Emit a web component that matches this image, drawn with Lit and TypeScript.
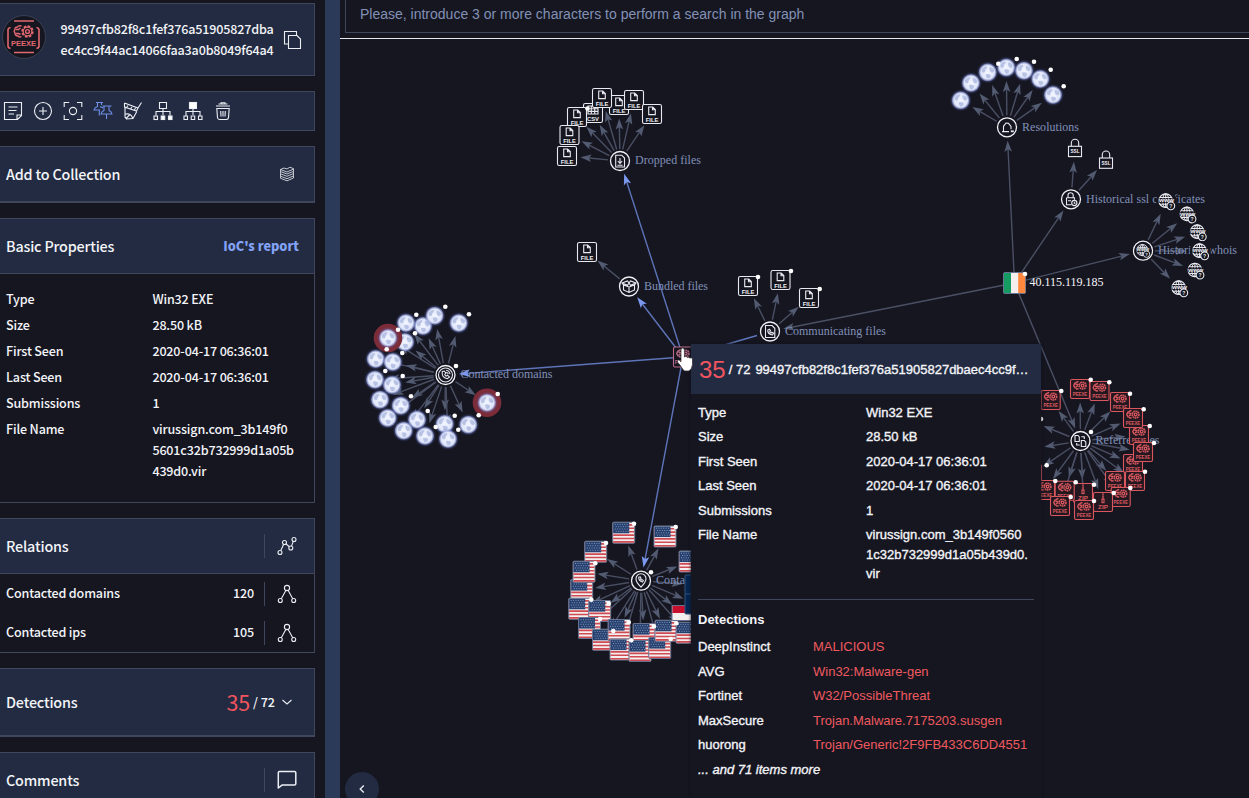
import { LitElement, html, svg, css } from "lit";
import { customElement } from "lit/decorators.js";

type P = [number, number];
type Item = [string, number, number];
interface Group {
  icon: string;
  at: P;
  label: string;
  width: number;
  items: Item[];
  dots: P[];
}

const of = (kind: string, pts: P[]): Item[] => pts.map(([x, y]) => [kind, x, y]);

const MAIN: P = [683, 357];
const IP: P = [1014.5, 283];

const GROUPS: Record<string, Group> = {
  dropped: {
    icon: "dropped", at: [620, 161], label: "Dropped files", width: 66,
    items: [["csv", 593, 113], ["file", 577, 117], ["file", 569.5, 135], ["file", 567, 156], ["file", 619, 105], ["file", 602, 98], ["file", 634, 100], ["file", 652, 114]],
    dots: [[587.5, 108.5]],
  },
  bundled: { icon: "bundled", at: [629, 286.5], label: "Bundled files", width: 64, items: [["file", 587, 252]], dots: [] },
  communicating: {
    icon: "communicating", at: [770, 331.5], label: "Communicating files", width: 101,
    items: [["file", 748, 286], ["file", 780.5, 280], ["file", 809, 298]],
    dots: [[758, 277], [791, 271], [819.7, 289]],
  },
  domains: {
    icon: "phone", at: [445.5, 375], label: "Contacted domains", width: 92,
    items: [
      ...of("globe", [[405, 342], [423, 326], [406, 323], [434.7, 315.7], [458.7, 323]]),
      ["alert", 388, 338],
      ...of("globe", [[375.7, 359], [392.7, 362], [375, 379.7], [392, 385], [380, 399.7], [400.7, 405.7], [387.7, 418], [417, 419.7], [403.7, 430.7], [425, 436], [444.7, 424], [448, 439], [468.3, 424.7]]),
      ["alert", 487, 402.7],
    ],
    dots: [[445.3, 306.7], [469, 314.3], [416.3, 314.7], [398, 329.7], [415, 333.3], [386.7, 349.3], [402.3, 353], [385.3, 371], [402.7, 376], [411, 396.3], [427.7, 411], [435.7, 427], [454.7, 415.7], [458.3, 429.7], [478.7, 415.3], [497.7, 394], [456, 366]],
  },
  ips: {
    icon: "pin", at: [641, 580.7], label: "Contacted ips", width: 67,
    items: [
      ...of("us", [[623.7, 532.7], [665, 536.5], [595.7, 551.7], [581.7, 590], [584, 571.7], [579.7, 608.7], [599.7, 611], [589.5, 628], [603.5, 639.7], [619, 630], [621, 649.5], [644, 634], [640, 651], [659.7, 648], [666, 630.7], [690, 561.5]]),
      ["id", 683, 613], ["us", 687, 632.7], ["navy", 696, 585], ["navy", 696, 604],
    ],
    dots: [[634, 523.7], [675.7, 527], [606, 543], [595.3, 563.3], [651, 572.3], [591.3, 599.7], [608.7, 603.7], [600, 619], [628.7, 622.3], [613.3, 631], [654, 626.3], [631.3, 640.3], [670.7, 639], [676.3, 623.3]],
  },
  resolutions: {
    icon: "resolutions", at: [1007, 127.3], label: "Resolutions", width: 57,
    items: of("globe", [[960.7, 100.3], [971, 83], [987.7, 72.3], [1006.3, 67.5], [1024, 70.7], [1040.3, 79], [1053, 95]]),
    dots: [[998.3, 63.7], [1016.7, 59], [1034, 61.7], [1050.7, 69.7], [1063.7, 86.3]],
  },
  ssl: { icon: "lock", at: [1071, 199.3], label: "Historical ssl certificates", width: 119, items: [["ssl", 1075, 148.3], ["ssl", 1106, 160]], dots: [] },
  whois: {
    icon: "whois", at: [1143, 250.7], label: "Historical whois", width: 79,
    items: of("www", [[1166.5, 201.5], [1187.7, 214.7], [1198, 232.5], [1200.3, 251.5], [1195.7, 270.8], [1179.5, 288.5]]),
    dots: [],
  },
  referrer: {
    icon: "referrer", at: [1080.5, 441], label: "Referrer files", width: 64,
    items: [
      ...of("peexe", [[1032, 474], [1031, 421], [1031, 449], [1050.7, 400], [1080, 389], [1099.5, 391], [1120, 402], [1139, 435], [1133, 418], [1133, 464], [1143, 452], [1115, 481], [1135, 481], [1120.7, 497]]),
      ["zip", 1083, 493], ["zip", 1103, 502],
      ...of("peexe", [[1045, 490], [1064.7, 490.7], [1060, 506], [1084, 510]]),
    ],
    dots: [[1061.3, 391], [1090.7, 379.7], [1109.3, 382.3], [1130, 393.7], [1143.7, 409.3], [1091, 432], [1149.7, 426], [1154, 443], [1145, 471.7], [1130.3, 488], [1113.7, 493], [1094, 484.7], [1094, 501], [1070.7, 497], [1075.7, 482.3], [1055.3, 481], [1046.7, 465.3], [1041, 419]],
  },
};

const edge = (from: P, to: P, blue = false, start = 0) => {
  const dx = to[0] - from[0], dy = to[1] - from[1];
  const len = Math.hypot(dx, dy), ux = dx / len, uy = dy / len;
  const gap = Math.min(13.5, len * 0.5);
  const tx = to[0] - ux * gap, ty = to[1] - uy * gap;
  const bx = tx - ux * 11, by = ty - uy * 11;
  const mx = tx - ux * 8.5, my = ty - uy * 8.5;
  return svg`<g class=${blue ? "edge blue" : "edge"}>
    <path d="M${from[0] + ux * start} ${from[1] + uy * start}L${mx} ${my}" />
    <path class="tip" d="M${tx} ${ty}L${bx - uy * 3.8} ${by + ux * 3.8}L${mx} ${my}L${bx + uy * 3.8} ${by - ux * 3.8}z" />
  </g>`;
};

const gear = svg`
  <circle cx="2.6" cy="-3.4" r="3.4" stroke-width="1.6" stroke-dasharray="1.7 .5" />
  <circle cx="2.6" cy="-3.4" r="1.4" stroke-width="1.3" />
  <path d="M-1.500-7.200q-2-.4-2.500 1-1.800.2-1.700 1.700-1.100 1 0 2 0 1.600 1.800 1.600.7 1.400 2.500.5M-4.500-4.800l3 .3M-4.300-2.400l2.500-.8" stroke-width="1.400" />`;

const glyph = (kind: string) => {
  switch (kind) {
    case "file":
      return svg`<rect class="plate" x="-9.5" y="-9.5" width="19" height="19" rx="1.8" />
        <path d="M-3.300-7h4l2.600 2.600v5h-6.600zM.5-7v2.800h2.800" />
        <text class="tag" y="7.600" textLength="12.500" lengthAdjust="spacingAndGlyphs">FILE</text>`;
    case "csv":
      return svg`<rect class="plate" x="-9.5" y="-9.5" width="19" height="19" rx="1.8" />
        <path d="M-5-7H5V1H-5zM-5-4.300H5M-5-1.600H5M-1.700-7v8M1.700-7v8" />
        <text class="tag" y="7.600" textLength="12" lengthAdjust="spacingAndGlyphs">CSV</text>`;
    case "peexe":
      return svg`<g class="red"><rect class="plate" x="-9.5" y="-9.5" width="19" height="19" rx="1.500" />
        ${gear}<text class="tag thin" y="7" textLength="14.500" lengthAdjust="spacingAndGlyphs">PEEXE</text></g>`;
    case "zip":
      return svg`<g class="red"><rect class="plate" x="-9.5" y="-9.5" width="19" height="19" rx="1.500" />
        <path stroke-width="1.800" d="M0-8.500v6" stroke-dasharray="1.300 .6" /><rect x="-1" y="-3" width="2" height="3.600" />
        <text class="tag" y="7.400" textLength="10" lengthAdjust="spacingAndGlyphs">ZIP</text></g>`;
    case "alert":
      return svg`<circle class="halo" r="14.300" />${glyph("globe")}`;
    case "globe":
      return svg`<circle r="11" fill="url(#glow)" stroke="none" /><circle r="9" fill="url(#ball)" stroke="none" />
        <path class="land" d="M-6-3q2-3 5-3 1 2-1 3l-1 3q-2 1-3-1zM2-5q3 0 4.500 3Q6 1 3.500 0 1-2 2-5zM-2 2q3-1 5 1 0 3-3 3.500Q-2 5-2 2z" />`;
    case "us":
      return svg`<rect class="flag" x="-11" y="-10.500" width="22" height="21" rx="1" />
        <path class="stripes" d="M-10.500-7.800h21M-10.500-4.400h21M-10.500-1h21M-10.500 2.400h21M-10.500 5.800h21M-10.500 9.200h21" />
        <rect class="canton" x="-10.500" y="-10" width="16" height="10.600" />
        <path class="stars" d="M-9-8.300H5M-8-6H5M-9-3.700H5M-8-1.400H5" />`;
    case "id":
      return svg`<rect class="flag" x="-11" y="-7.500" width="22" height="15" /><rect class="rose" x="-10.500" y="-7" width="21" height="7" />`;
    case "navy":
      return svg`<rect class="flag navy" x="-11" y="-10" width="22" height="20" rx="1" />`;
    case "ireland":
      return svg`<rect class="flag" x="-11" y="-10.500" width="22" height="21" rx="1.500" />
        <rect class="green" x="-10.500" y="-10" width="7" height="20" /><rect class="orange" x="3.700" y="-10" width="7" height="20" />`;
    case "ssl":
      return svg`<rect x="-6.500" y="-2" width="13" height="10.300" class="plate" /><path d="M-3.700-2v-3.300a3.700 3.700 0 0 1 7.400 0V-2" />
        <text class="tag small" y="5.200" textLength="9" lengthAdjust="spacingAndGlyphs">SSL</text>`;
    case "www":
      return svg`<circle class="back" r="10.500" /><circle r="6.800" cx="-.8" cy="-.8" /><ellipse cx="-.8" cy="-.8" rx="3" ry="6.800" /><path d="M-6.500-4H5M-6.500 2.700H4M-.8-7.500V6" />
        <rect class="mask" x="-8" y="-3.200" width="15.500" height="4.600" />
        <text class="tag" y=".9" textLength="15" lengthAdjust="spacingAndGlyphs">www</text>
        <circle class="plate" cx="4.300" cy="4.300" r="3.900" /><text class="tag small" x="4.300" y="6.200">?</text>`;
    case "main":
      return svg`<g class="mainred"><rect class="plate" x="-9.500" y="-10" width="19" height="20" rx="1.500" />${gear}
        <text class="tag thin" y="7.200">PEEXE</text></g>`;
    case "dropped":
      return svg`<path d="M-4.300-5.800h6l2.800 2.800v9h-8.800zM0-3v5.200M-2.200 0 0 2.400 2.200 0M-2.600 4.200h5.200" />`;
    case "bundled":
      return svg`<path d="M-5.500-1.500 0 .5l5.500-2v5L0 6l-5.500-2.500zM0 .5V6M-5.500-1.500-7-3.500l5.500-2L0-3.500l1.500-2 5.500 2-1.500 2M-7-3.500-1.500-1.200 0-3.500l1.500 2.300L7-3.500" />`;
    case "communicating":
      return svg`<path d="M-4.500-6H2l2.800 2.800V6h-9.300zM-2.200-1.500q-.5 4 4.600 5l1.200-1.700-1.800-1-.8.800q-1.200-.6-1.300-1.600l.8-.8-1-1.500z" />`;
    case "phone":
      return svg`<circle r="7" /><path d="M-3.200-3.500q-1.200 6 5 7.200L4 1.900 1.900.3.700 1.200Q-.8.300-.7-.8L.4-1.900-1.200-4zM.5-4.800Q4-4.500 4.500-.8M.8-2.800q1.700.2 2 2" />`;
    case "pin":
      return svg`<path d="M0 6.500Q-5.300 1-5-2a5 5 0 0 1 10 0Q5 1 0 6.500zM-2.300-3.500q0 4 3.800 4.700l.8-1.500-1.300-.8-.7.500-.8-1 .5-.8-.8-1.500z" />`;
    case "resolutions":
      return svg`<path d="M-5 4.300H2M-3.500 4V-1L-1-4.300 1.500-4 4-.8V2" /><path d="M3.800 4h3" stroke-width="1.800" />`;
    case "lock":
      return svg`<path d="M-4.500-1.500h8v2M-4.500-1.500v7h5M-3-1.500V-4a2.600 2.600 0 0 1 5.200 0v2.500M-3 1.500h3" /><circle cx="3.300" cy="3.700" r="2.600" /><path d="M3.300 2.400v1.500h1.200" />`;
    case "whois":
      return svg`<g transform="scale(.82)">${glyph("www")}</g>`;
    case "referrer":
      return svg`<path d="M-5.500-5.500h3L-1.200-4V.5h-4.300zM.8-.5h3L5.300 1v4.500H.8zM.8-4.300h3v2.300M-.8 4h-3V2" />`;
    default:
      return svg``;
  }
};

const at = (kind: string, x: number, y: number) => svg`<g class="glyph" transform="translate(${x} ${y})">${glyph(kind)}</g>`;

@customElement("relation-graph")
class RelationGraph extends LitElement {
  static styles = css`
    :host { display: block; width: 909px; height: 759px; }
    svg { display: block; width: 100%; height: 100%; }
    .edge { stroke: #4a5064; stroke-width: 1.400; fill: none; }
    .edge .tip { fill: #525b71; stroke: none; }
    .edge.blue { stroke: #5d74b8; }
    .edge.blue .tip { fill: #7c98ee; }
    .glyph { fill: none; stroke: #e9eaf0; stroke-width: 1.100; }
    .plate { fill: #161621; }
    .back { fill: #161621; stroke: none; }
    .hub { fill: #161621; stroke: #f0f1f5; stroke-width: 1.300; }
    .tag { font: 700 6px "Liberation Sans", sans-serif; fill: #f0f1f5; stroke: none; text-anchor: middle; }
    .tag.small { font-size: 5px; }
    .tag.thin { font-size: 5px; }
    .red { stroke: #d9585f; }
    .red .tag { fill: #d9585f; }
    .red .plate { fill: #241820; }
    .mainred { stroke: #bd6c87; }
    .mainred .tag { fill: #bd6c87; }
    .label { font: 12px "Liberation Serif", serif; fill: #8090b7; }
    .label.ip { fill: #f5f5f7; }
    .halo { fill: #7b2c38; stroke: none; }
    .land { fill: #a7b4dc; fill-opacity: .75; stroke: none; }
    .flag { fill: #f4eeee; stroke: #66728f; stroke-width: 1; }
    .flag.navy { fill: #07264f; stroke: #315280; }
    .stripes { stroke: #cf4a52; stroke-width: 1.600; }
    .canton { fill: #26406f; stroke: none; }
    .stars { stroke: #8fa1c2; stroke-width: .9; stroke-dasharray: 1 1.400; }
    .rose { fill: #c8102e; stroke: none; }
    .green { fill: #169b62; stroke: none; }
    .orange { fill: #ff883e; stroke: none; }
    .mask { fill: #161621; fill-opacity: .75; stroke: none; }
    .dot { fill: #fff; }
  `;
  render() {
    const all = Object.values(GROUPS);
    const g = GROUPS;
    return html`<svg viewBox="340 39 909 759">
      <defs>
        <radialGradient id="glow"><stop offset=".6" stop-color="#6a7ad0" stop-opacity=".75" /><stop offset="1" stop-color="#5565b5" stop-opacity="0" /></radialGradient>
        <radialGradient id="ball"><stop offset="0" stop-color="#f3f6ff" /><stop offset=".75" stop-color="#e0e6fa" /><stop offset="1" stop-color="#a9b5ea" stop-opacity=".35" /></radialGradient>
      </defs>
      ${[g.dropped, g.bundled, g.domains, g.ips].map((t) => edge(MAIN, t.at, true))}
      <path class="edge blue" d="M683 357L757 335.500" />
      ${[g.communicating, g.resolutions, g.ssl, g.whois, g.referrer].map((t) => edge(IP, t.at))}
      ${all.map((t) => t.items.map((i) => edge(t.at, [i[1], i[2]], false, 12)))}
      ${all.map((t) => svg`<text class="label" x=${t.at[0] + 15} y=${t.at[1] + 3.3} textLength=${t.width}>${t.label}</text>`)}
      <text class="label ip" x="1029.500" y="286" textLength="74">40.115.119.185</text>
      ${all.map((t) => svg`
        ${t.items.map((i) => at(i[0], i[1], i[2]))}
        <circle class="hub" cx=${t.at[0]} cy=${t.at[1]} r="9.500" />
        ${at(t.icon, t.at[0], t.at[1])}
        ${t.dots.map((d) => svg`<circle class="dot" cx=${d[0]} cy=${d[1]} r="2.300" />`)}`)}
      ${at("ireland", IP[0], IP[1])}<circle class="dot" cx="1025" cy="274" r="2.300" />
      ${at("main", MAIN[0], MAIN[1])}
    </svg>`;
  }
}

const ICONS: Record<string, unknown> = {
  copy: svg`<path d="M5 14H1.500V1.500h12V5M5.500 5.500H14l3.500 3.500v9.500h-12z" />`,
  note: svg`<path d="M1.500 1.500h17v13l-4 4h-13zM18.500 14h-4.500v4.500M5.500 6h9M5.500 9.500h8M5.500 13h5.500" />`,
  plus: svg`<circle cx="10" cy="10" r="8.500" /><path d="M10 6v8M6 10h8" />`,
  focus: svg`<path d="M1.200 6V1.500h5M14 1.500h4.800V6M18.800 14v4.500H14M6 18.500H1.200V14" /><circle cx="10" cy="10" r="3.600" />`,
  pins: svg`<path d="M3 1.500h7M4.500 1.500v4Q1.500 6.500 1 9h6M8.500 1.500V4M6.300 9v5.500M9.500 5h9M11 5v4.500q-2.500 1-3 3.500h11q-.500-2.500-3-3.500V5M13.500 13v5M7 5.500l3 1.500" />`,
  marker: svg`<path d="M1.500 2 15 7l3.500-5.500M1.500 2v4l12 4L15 7M2 6.500v9.500l1.500 2 6.500-.5 3.800-7M3 17.500 7 13.500M2 13.200q3-.7 5 .3t2.500 3.700M5 4.500 3.500 6.500M9 6 7.500 8M12.500 7l-1 2" />`,
  childs: svg`<path d="M6.500 1.500h7v6h-7zM10 7.500v6.500M3 14.500v-4h14v4" /><rect x="1" y="15" width="3.500" height="3.500" /><g class="solid"><rect x="8.200" y="15" width="3.500" height="3.500" /><rect x="15.500" y="15" width="3.500" height="3.500" /></g>`,
  parent: svg`<rect class="solid" x="6.500" y="1.500" width="7" height="6" /><path d="M10 7.500v6.500M3 14.500v-4h14v4M1 15h3.500v3.500H1zM8.200 15h3.500v3.500H8.200zM15.500 15H19v3.500h-3.500z" />`,
  trash: svg`<path d="M3 5h14M5.500 3h9M8 3V1.800h4V3M3.800 7.500h12.400l-.7 9q-.2 2-2 2h-7q-1.800 0-2-2zM7.700 10l.3 5.500M10 10v5.500M12.300 10l-.3 5.500" />`,
  stack: svg`<path stroke-width=".8" d="M3.500 5.500 7 4l3 1 3-1.800 3.500 1.500M3.500 5.500v2l6.500 2.500 6.500-2.700V4.700M3.500 5.500 10 8l6.500-3M3.500 7.500v2.300L10 12.300l6.500-2.800V7.500M3.500 10v2.200l6.500 2.500 6.500-2.800V9.500M3.500 12.300v2l6.500 2.500 6.500-2.800v-2" />`,
  path: svg`<circle cx="3" cy="16.500" r="2" /><circle cx="7.500" cy="6.500" r="2" /><circle cx="13.800" cy="12" r="2" /><circle cx="17" cy="3.500" r="2" /><path d="M3.800 14.600 6.700 8.300M9 8l3.500 2.700M14.500 10.100l1.800-4.700" />`,
  tree: svg`<circle cx="10" cy="4" r="2.600" /><circle cx="3.300" cy="16.500" r="2" /><circle cx="16.700" cy="16.500" r="2" /><path d="M8.800 6.500 4.300 14.700M11.200 6.500l4.500 8.200" />`,
  down: svg`<path d="M5.500 8l4.500 4L14.500 8" />`,
  left: svg`<path d="M12 6l-4 4 4 4" />`,
  chat: svg`<path stroke-width="1.500" stroke-linejoin="round" d="M2.500 1.500h15q1.300 0 1.300 1.300v11q0 1.300-1.300 1.300H5L1.300 18V2.800q0-1.300 1.200-1.300z" />`,
};

const icon = (name: string, cls = "") => html`<svg class="icon ${cls}" viewBox="0 0 20 20">${ICONS[name]}</svg>`;

@customElement("app-root")
class AppRoot extends LitElement {
  static styles = css`
    :host { display: flex; width: 1249px; height: 798px; overflow: hidden; position: relative; background: #161621; color: #f3f4f8;
      font: 500 12.550px/21px "Noto Sans CJK SC", sans-serif; letter-spacing: -.16px; }
    .side { box-sizing: border-box; width: 325px; padding: 3px 10px 0 0; display: flex; flex-direction: column; gap: 15px; flex: none; height: 900px; }
    .split { width: 15px; flex: none; background: #2c3a59; }
    .card { box-sizing: border-box; border: 1px solid #40475c; border-left: 0; background: #222b41; flex: none; }
    .row { display: flex; align-items: center; }
    .row > span { margin-top: -2px; }
    .id { height: 73px; padding-left: 2px; }
    .avatar { width: 44px; height: 44px; flex: none; margin-top: -6px; }
    .hash { width: 213px; margin: -2px 0 0 14.500px; white-space: nowrap; }
    .icon { width: 20px; height: 20px; fill: none; stroke: #eceef4; stroke-width: 1.100; display: block; flex: none; }
    .icon .solid { fill: #fff; }
    .icon.blue { stroke: #6f8fe8; }
    .icon.copy { margin-left: 9px; }
    .tools { height: 40px; gap: 10px; padding-left: 3px; }
    .head { box-sizing: border-box; padding: 0 15px 0 6px; justify-content: space-between; font-size: 14.350px; letter-spacing: -.18px; }
    .add { height: 57px; border-bottom-width: 2px; padding-right: 17px; }
    .body { background: #161621; }
    .basic { height: 285px; }
    .basic .head { height: 55px; border-bottom: 1px solid #40475c; background: #222b41; }
    .link { color: #82a2f5; font-size: 12.700px; font-weight: 900; letter-spacing: 0; }
    .props { display: grid; grid-template-columns: 146.400px 144px; row-gap: 5px; padding: 14px 0 0 6px; margin: 0; }
    .props span { white-space: pre; }
    .rel { height: 135px; }
    .rel .head { height: 55px; border-bottom: 1px solid #40475c; background: #222b41; padding-right: 17px; }
    .line { height: 39px; padding: 0 17px 0 6px; }
    .grow { flex: 1; }
    .bar { width: 1px; height: 24px; background: #40475c; margin: 0 12px 0 10px; }
    .det { height: 69px; border-bottom-width: 2px; padding-right: 17px; }
    .det .icon { margin-left: 2px; }
    .big { font-size: 21.500px; color: #f0555f; font-weight: 400; margin-right: 3px; }
    .tot { font-size: 12.550px; letter-spacing: 0; }
    .com { height: 56px; padding-right: 17px; }
    .main { flex: 1; display: flex; flex-direction: column; letter-spacing: 0; }
    .search { box-sizing: border-box; height: 33px; margin: 0 0 5px 5px; border: 1px solid #40475c; border-width: 0 0 1px 1px; padding-left: 14px; font: 14px/28px "Liberation Sans", sans-serif; color: #8291b5; }
    .rule { height: 1px; background: #e6e7ea; flex: none; }
    .tip { position: absolute; left: 691px; top: 344px; width: 350px; height: 460px; background: #161621; box-shadow: 0 0 3px #101019; font: 13px/19.500px "Liberation Sans", sans-serif; letter-spacing: 0; -webkit-text-stroke: .35px currentColor; }
    .tiphead { box-sizing: border-box; height: 50px; padding: 1px 0 0 8px; background: #222b41; white-space: pre; }
    .tiphead > span { margin-top: 0; }
    .tiphead .big { font-size: 24px; margin-right: 3px; -webkit-text-stroke: 0; }
    .tiphead .sum { margin-right: 5px; }
    .grid { display: grid; grid-template-columns: 168px 168px; row-gap: 5px; padding: 8.500px 0 15px; margin: 0 7px; border-bottom: 1px solid #40475c; }
    .grid span, .hits span { white-space: pre; }
    .hits { display: grid; grid-template-columns: 115px auto; row-gap: 5px; padding: 7.500px 7px 5px; }
    .sec { padding: 10.500px 7px 0; font-weight: 700; -webkit-text-stroke: 0; }
    .bad { color: #ef5a5f; -webkit-text-stroke: 0; }
    .more { padding-left: 7px; font-style: italic; }
    .back { position: absolute; left: 345px; top: 772px; width: 34px; height: 34px; border-radius: 50%; background: #222b41; display: flex; align-items: center; justify-content: center; }
    .back .icon { width: 18px; height: 18px; stroke-width: 1.500; }
    .cursor { position: absolute; left: 675px; top: 347px; width: 20px; height: 25px; }
    .ring { fill: #161621; stroke: #3a4154; }
    .mark { fill: none; stroke: #e0686f; stroke-width: 1.600; }
    .mark text { font: 700 8px "Liberation Sans", sans-serif; letter-spacing: 0; fill: #e0686f; stroke: none; }
  `;
  render() {
    const props = [["Type", "Win32 EXE"], ["Size", "28.50 kB"], ["First Seen", "2020-04-17 06:36:01"], ["Last Seen", "2020-04-17 06:36:01"], ["Submissions", "1"]];
    const hits = [["DeepInstinct", "MALICIOUS"], ["AVG", "Win32:Malware-gen"], ["Fortinet", "W32/PossibleThreat"], ["MaxSecure", "Trojan.Malware.7175203.susgen"], ["huorong", "Trojan/Generic!2F9FB433C6DD4551"]];
    return html`
      <div class="side">
        <div class="card row id">
          <svg class="avatar" viewBox="0 0 44 44">
            <circle class="ring" cx="22" cy="22" r="21.500" />
            <g class="mark"><path d="M12 6h20M12 37.500h20M8.500 12.500q-2.500.5-2.500 2.500v16q0 2 2.500 2.500M34.500 12.500q2.500.5 2.500 2.500v16q0 2-2.500 2.500" />
              <circle cx="25.500" cy="16.500" r="5.200" stroke-dasharray="2.600 1.400" stroke-width="2" /><circle cx="25.500" cy="16.500" r="4.300" stroke-width="1.200" /><circle cx="25.500" cy="16.500" r="1.900" stroke-width="1.400" />
              <path stroke-width="1.400" d="M19.500 11q-3-1-4 1-3 .2-2.500 2.500-1.500 1.500 0 3.500 0 3 3 3 1.500 1.700 3.500.5M14 14.500h2.500l2-1.500M14 18.500h2.500l2 1" />
              <text x="9" y="31" textLength="25" lengthAdjust="spacingAndGlyphs">PEEXE</text></g>
          </svg>
          <div class="hash">99497cfb82f8c1fef376a51905827dba<br />ec4cc9f44ac14066faa3a0b8049f64a4</div>
          ${icon("copy", "copy")}
        </div>
        <div class="card row tools">${["note", "plus", "focus", "pins", "marker", "childs", "parent", "trash"].map((n) => icon(n, n === "pins" ? "blue" : ""))}</div>
        <div class="card row head add"><span>Add to Collection</span>${icon("stack")}</div>
        <div class="card body basic">
          <div class="row head"><span>Basic Properties</span><span class="link">IoC's report</span></div>
          <div class="props">
            ${props.map(([a, b]) => html`<span>${a}</span><span>${b}</span>`)}
            <span>File Name</span><span>${"virussign.com_3b149f0\n5601c32b732999d1a05b\n439d0.vir"}</span>
          </div>
        </div>
        <div class="card body rel">
          <div class="row head"><span class="grow">Relations</span><div class="bar"></div>${icon("path")}</div>
          ${[["Contacted domains", "120"], ["Contacted ips", "105"]].map(([a, b]) => html`<div class="row line"><span class="grow">${a}</span><span>${b}</span><div class="bar"></div>${icon("tree")}</div>`)}
        </div>
        <div class="card row head det"><span class="grow">Detections</span><span class="big">35</span><span class="tot">/ 72</span>${icon("down")}</div>
        <div class="card row head com"><span class="grow">Comments</span><div class="bar"></div>${icon("chat")}</div>
      </div>
      <div class="split"></div>
      <div class="main">
        <div class="search">Please, introduce 3 or more characters to perform a search in the graph</div>
        <div class="rule"></div>
        <relation-graph></relation-graph>
      </div>
      <div class="back">${icon("left")}</div>
      <div class="tip">
        <div class="tiphead row"><span class="big">35</span><span class="sum">/ 72</span><span>99497cfb82f8c1fef376a51905827dbaec4cc9f…</span></div>
        <div class="grid">
          ${props.map(([a, b]) => html`<span>${a}</span><span>${b}</span>`)}
          <span>File Name</span><span>${"virussign.com_3b149f0560\n1c32b732999d1a05b439d0.\nvir"}</span>
        </div>
        <div class="sec">Detections</div>
        <div class="hits">${hits.map(([a, b]) => html`<span>${a}</span><span class="bad">${b}</span>`)}</div>
        <div class="more">... and 71 items more</div>
      </div>
      <svg class="cursor" viewBox="0 0 20 25">
        <path fill="#fff" stroke="#222" stroke-width=".7" d="M6 3q0-2 1.700-2t1.700 2v7q1-1 2.500-.3l.3.800q1.600-.8 2.600.5 1.900-.6 2.700 1v5.500Q17 22 14 24H9.500Q8 23 6 19.500L2.500 15q-.5-1.800 1-2 1 0 2.500 1.700z" />
      </svg>`;
  }
}
